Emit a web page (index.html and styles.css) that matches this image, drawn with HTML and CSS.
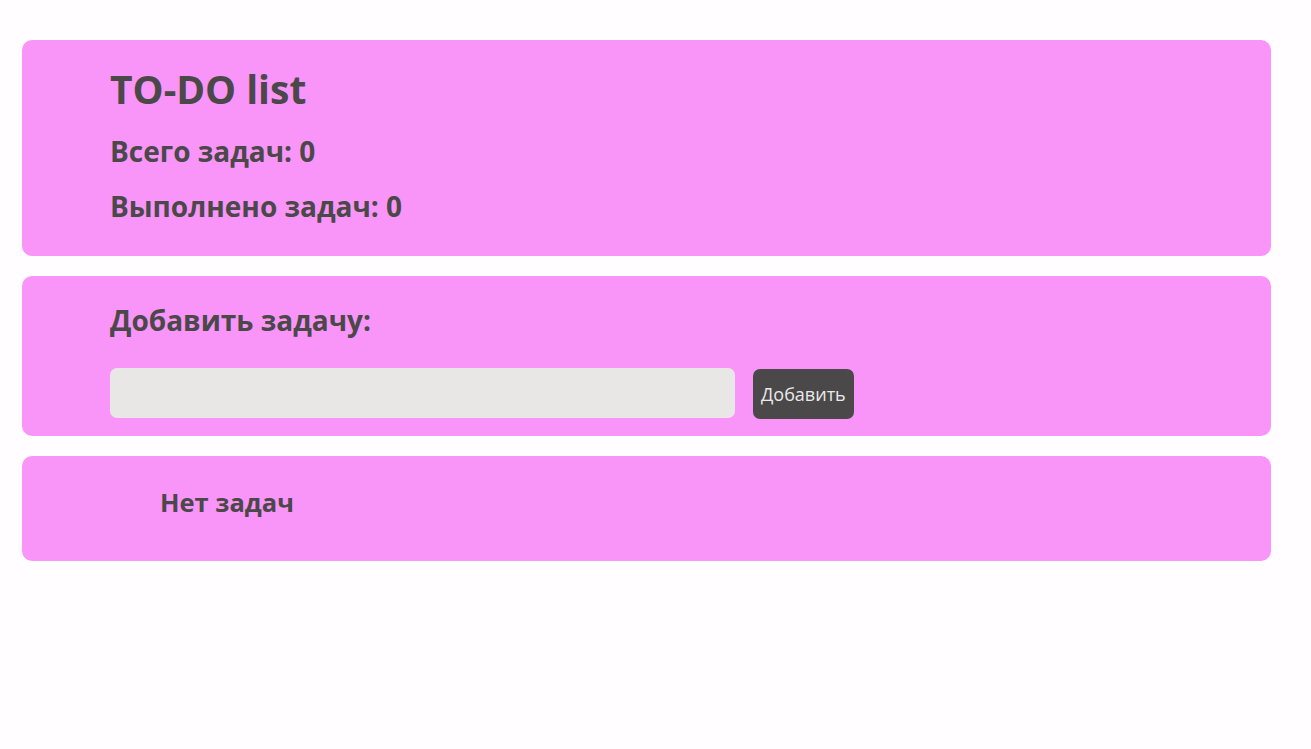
FILE: index.html
```html
<!DOCTYPE html>
<html lang="ru">
<head>
<meta charset="utf-8">
<title>TO-DO list</title>
<link rel="stylesheet" href="styles.css">
</head>
<body>
<main class="app">
  <section class="card card-header">
    <h1 class="title">TO-DO list</h1>
    <h2 class="stat">Всего задач: 0</h2>
    <h2 class="stat">Выполнено задач: 0</h2>
  </section>
  <section class="card card-add">
    <h2 class="add-title">Добавить задачу:</h2>
    <form class="add-form">
      <input class="add-input" type="text">
      <button class="add-btn" type="button">Добавить</button>
    </form>
  </section>
  <section class="card card-list">
    <h2 class="empty">Нет задач</h2>
  </section>
</main>
</body>
</html>
```
FILE: styles.css
```css
html, body {
  margin: 0;
  padding: 0;
  background: #fffdff;
}
body {
  font-family: "Open Sans", "Noto Sans", sans-serif;
  color: #4a4848;
}
.app {
  display: flex;
  flex-direction: column;
  gap: 20px;
  padding: 40px 40px 0 22px;
}
.card {
  background: #f994f9;
  border-radius: 10px;
  padding: 0 0 0 88px;
  box-sizing: border-box;
}
.card-header {
  height: 216px;
  padding-top: 24px;
}
.title {
  margin: 0 0 11px;
  font-size: 39px;
  line-height: 49px;
  font-weight: 700;
}
.stat {
  margin: 0;
  font-size: 28px;
  line-height: 55px;
  font-weight: 700;
}
.card-add {
  height: 160px;
  padding-top: 24px;
}
.add-title {
  margin: 0;
  font-size: 28px;
  line-height: 40px;
  font-weight: 700;
}
.add-form {
  display: flex;
  align-items: flex-start;
  gap: 18px;
  margin-top: 28px;
}
.add-input {
  box-sizing: border-box;
  width: 625px;
  height: 50px;
  padding: 0 10px;
  border: none;
  border-radius: 7px;
  background: #e9e7e5;
  outline: none;
}
.add-btn {
  box-sizing: border-box;
  height: 50px;
  margin-top: 1px;
  padding: 0 8px;
  border: none;
  border-radius: 7px;
  background: #4a4848;
  color: #ece9e9;
  font-family: inherit;
  font-size: 18px;
}
.card-list {
  height: 105px;
  padding: 26px 0 0 138px;
}
.empty {
  margin: 0;
  font-size: 25.5px;
  line-height: 40px;
  font-weight: 700;
}
```
